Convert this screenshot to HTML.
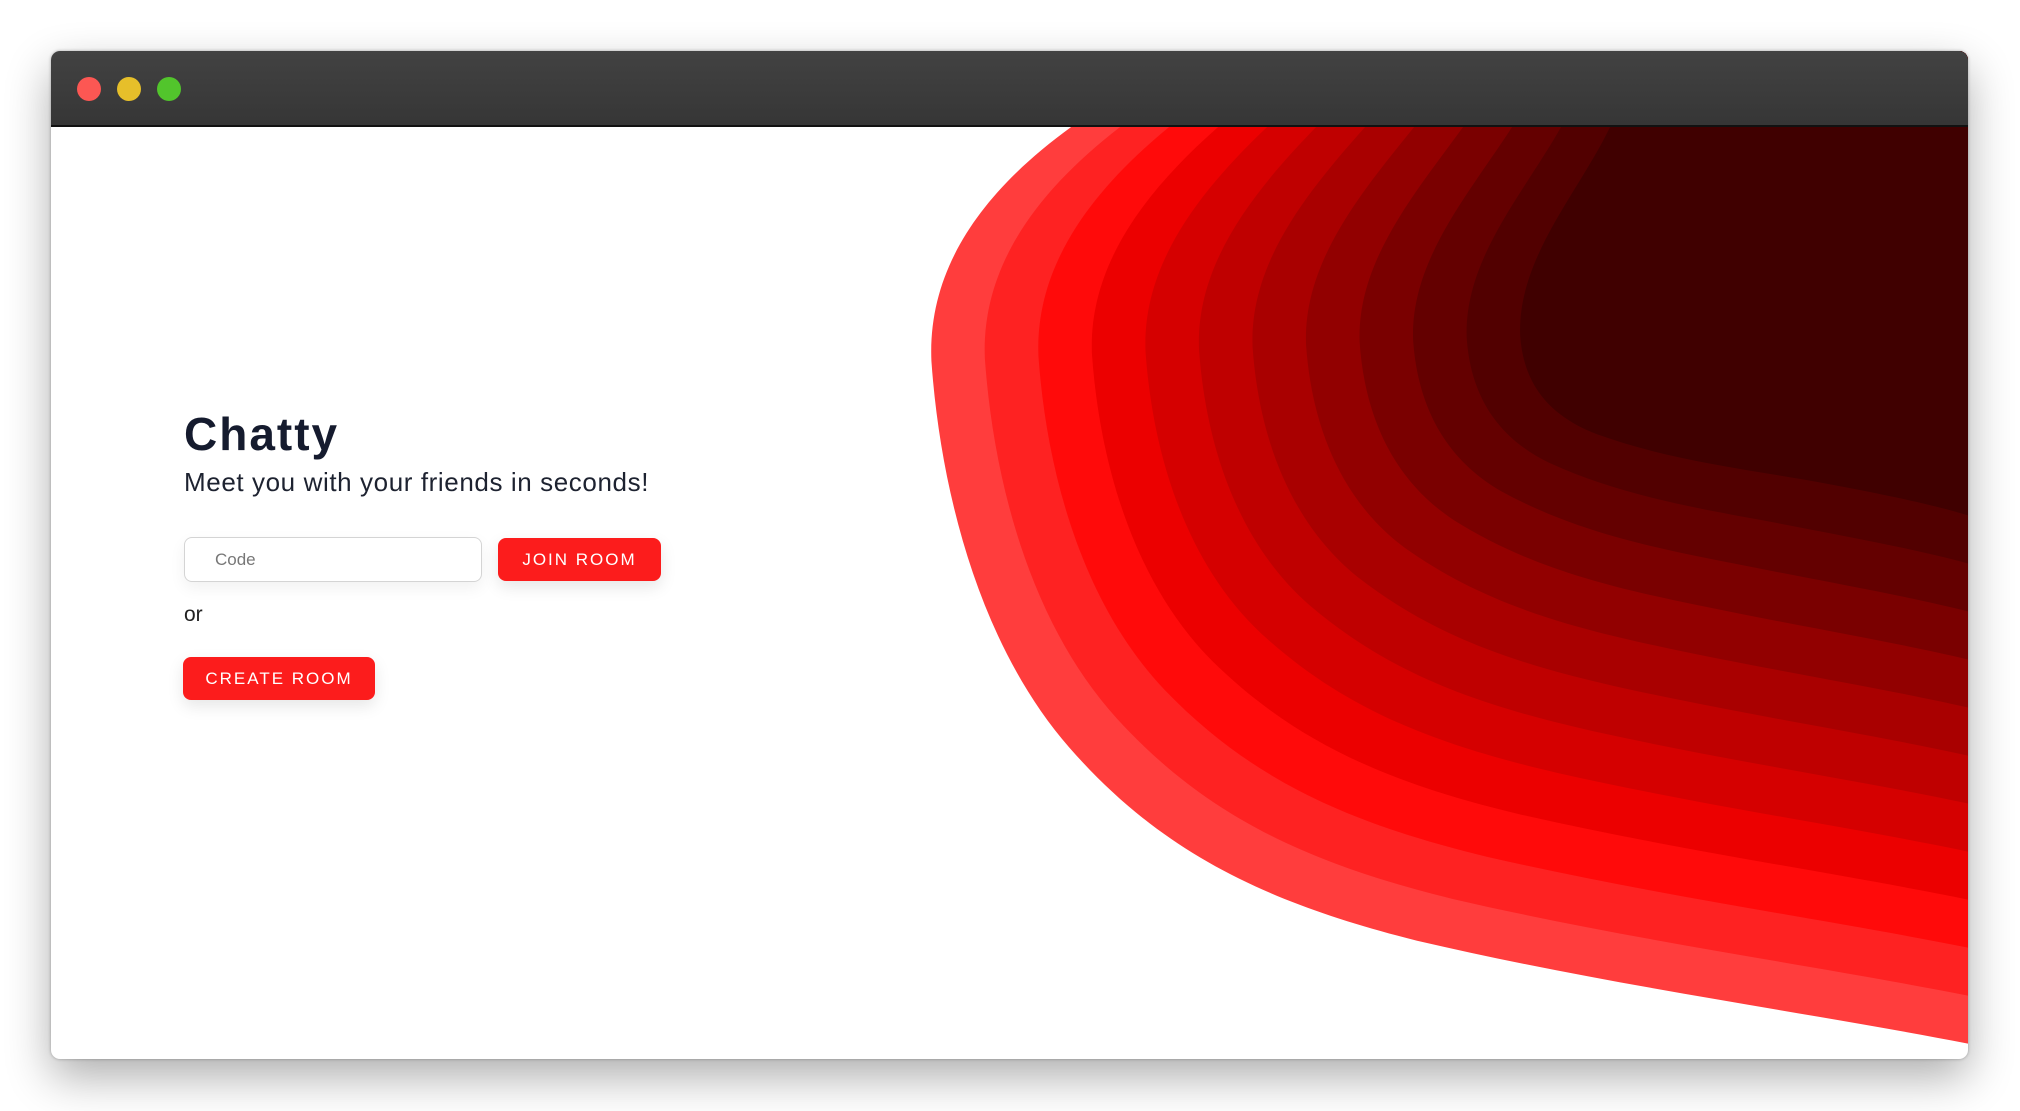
<!DOCTYPE html>
<html><head><meta charset="utf-8"><style>
html,body{margin:0;padding:0;background:#fff;width:2020px;height:1111px;overflow:hidden;font-family:"Liberation Sans",sans-serif}
.win{position:absolute;left:51px;top:51px;width:1917px;height:1008px;border-radius:9px;overflow:hidden;box-shadow:0 18px 45px rgba(0,0,0,.32),0 0 3px rgba(0,0,0,.3);background:#fff}
.bar{position:absolute;left:0;top:0;right:0;height:74px;background:linear-gradient(#424242,#363636);border-bottom:2px solid #111}
.dot{position:absolute;top:26px;width:24px;height:24px;border-radius:50%}
svg{position:absolute;left:-51px;top:-51px}
h1{position:absolute;left:133px;top:356px;margin:0;font-size:46px;font-weight:bold;color:#151b2e;letter-spacing:2px}
.sub{position:absolute;left:133px;top:416px;font-size:26px;color:#1d2230;letter-spacing:.6px}
.inp{position:absolute;left:133px;top:486px;width:298px;height:45px;border:1px solid #d4d4d4;border-radius:8px;box-sizing:border-box;box-shadow:0 6px 16px rgba(0,0,0,.06)}
.inp span{position:absolute;left:30px;top:12px;font-size:17px;color:#777}
.btn{position:absolute;background:#fc1c1c;color:#fff;border-radius:8px;font-size:17px;letter-spacing:2px;text-align:center;box-shadow:0 6px 16px rgba(0,0,0,.1)}
.or{position:absolute;left:133px;top:552px;font-size:21px;color:#222}
</style></head><body>
<div class="win">
<svg id="s" width="2020" height="1111" viewBox="0 0 1568 862">
<path fill="#ff3d3d" d="M960 -100 L880 60 L832 98 C760 150 720 210 723 280 C730 380 760 500 830 580 C900 660 980 700 1100 730 C1250 765 1400 785 1528 810 L1600 830 L1600 -100 Z"/>
</svg>
<div class="bar"><div class="dot" style="left:26px;background:#fc5753"></div><div class="dot" style="left:66px;background:#e6bf2a"></div><div class="dot" style="left:106px;background:#52c52c"></div></div>
<h1>Chatty</h1>
<div class="sub">Meet you with your friends in seconds!</div>
<div class="inp"><span>Code</span></div>
<div class="btn" style="left:447px;top:487px;width:163px;height:43px;line-height:43px">JOIN ROOM</div>
<div class="or">or</div>
<div class="btn" style="left:132px;top:606px;width:192px;height:43px;line-height:43px">CREATE ROOM</div>
</div>
<script>
(function(){
var A=[960,-100,880,60,832,98,760,150,720,210,723,280,730,380,760,500,830,580,900,660,980,700,1100,730,1250,765,1400,785,1528,810,1600,830];
var B=[1300,-100,1275,40,1250,98,1225,150,1178,200,1180,260,1182,290,1195,320,1240,337,1290,355,1340,362,1400,372,1450,381,1500,391,1528,400,1600,420];
var cols=["#ff3d3d","#fe2222","#ff0a0a","#ec0000","#d50000","#bf0000","#a90000","#920000","#7a0000","#640000","#520000","#400000"];
var s=document.getElementById('s'),h='';
for(var i=0;i<12;i++){var t=i/11,p=[];for(var k=0;k<A.length;k++)p.push((A[k]+(B[k]-A[k])*t).toFixed(1));
var d='M'+p[0]+' '+p[1]+' L'+p[2]+' '+p[3]+' L'+p[4]+' '+p[5];
for(var c=6;c<30;c+=6)d+=' C'+p.slice(c,c+6).join(' ');
d+=' L'+p[30]+' '+p[31]+' L1600 -100 Z';
h+='<path fill="'+cols[i]+'" d="'+d+'"/>';}
s.innerHTML=h;
})();
</script>
</body></html>
